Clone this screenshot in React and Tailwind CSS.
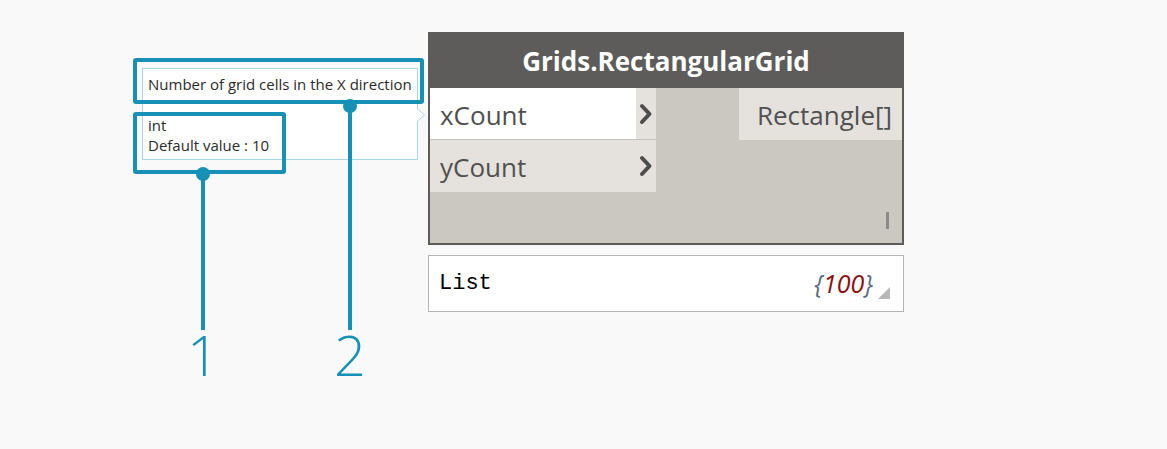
import React from 'react'

const TEAL = 'bg-[#1690b5]'

function Callout({ className, children }) {
  return (
    <div className={`absolute rounded-[3px] border-4 border-[#1690b5] ${className}`}>{children}</div>
  )
}

function Leader({ x, top, length, label }) {
  return (
    <div className="absolute flex flex-col items-center" style={{ left: x - 30, top: top - 7, width: 60 }}>
      <div className={`h-[14px] w-[14px] rounded-full ${TEAL}`}></div>
      <div className={`-mt-[7px] w-[4px] ${TEAL}`} style={{ height: length }}></div>
      <div className="mt-[-4px] font-['Open_Sans',sans-serif] text-[56px] font-light leading-[56px] text-[#1690b5]">
        {label}
      </div>
    </div>
  )
}

function Chevron() {
  return (
    <svg width="14" height="22" viewBox="0 0 14 22" className="text-[#4d4d4d]">
      <path d="M3 3 L10.5 11 L3 19" fill="none" stroke="currentColor" strokeWidth="4" strokeLinecap="round" strokeLinejoin="round" />
    </svg>
  )
}

function Tooltip() {
  return (
    <div className="relative ml-[142px] mt-[36px] h-[92px] w-[276px] border border-[#a9d5e6] bg-white px-[5px] pt-[5px] font-['Open_Sans',sans-serif] text-[15px] leading-[20px] text-[#2b2b2b]">
      <div className="whitespace-nowrap">Number of grid cells in the X direction</div>
      <div className="mt-[21px]">int</div>
      <div>Default value : 10</div>
      <svg className="absolute right-[-9px] top-[39px]" width="9" height="14" viewBox="0 0 9 14">
        <path d="M0 0.5 L7.5 7 L0 13.5" fill="#ffffff" stroke="#a9d5e6" strokeWidth="1" />
        <path d="M0 1.5 L0 12.5" stroke="#ffffff" strokeWidth="1.5" />
      </svg>
    </div>
  )
}

function Node() {
  return (
    <div className="flex w-[476px] flex-col">
      <div className="flex flex-col border-2 border-[#5e5c5a] bg-[#cbc7c1]">
        <div className="flex h-[54px] items-center justify-center bg-[#5e5c5a] font-['Open_Sans',sans-serif] text-[26px] font-bold text-white">
          Grids.RectangularGrid
        </div>
        <div className="flex h-[155px] justify-between">
          <div className="flex w-[226px] flex-col">
            <div className="flex h-[52px] border-b border-[#c6c3be]">
              <div className="flex w-[206px] items-center bg-white pl-[10px] pt-[3px] font-['Open_Sans',sans-serif] text-[26px] text-[#505050]">
                xCount
              </div>
              <div className="flex flex-1 items-center justify-center bg-[#e5e2dd]">
                <Chevron />
              </div>
            </div>
            <div className="flex h-[52px] bg-[#e5e2dd]">
              <div className="flex w-[206px] items-center pl-[10px] pt-[3px] font-['Open_Sans',sans-serif] text-[26px] text-[#505050]">
                yCount
              </div>
              <div className="flex flex-1 items-center justify-center">
                <Chevron />
              </div>
            </div>
          </div>
          <div className="flex flex-col items-end justify-between">
            <div className="flex h-[52px] w-[163px] items-center justify-end bg-[#e5e2dd] pr-[10px] pt-[3px] font-['Open_Sans',sans-serif] text-[26px] text-[#505050]">
              Rectangle[]
            </div>
            <div className="mb-[14px] mr-[13px] h-[17px] w-[3px] bg-[#8b8b8b]"></div>
          </div>
        </div>
      </div>
      <div className="relative mt-[10px] flex h-[57px] items-center justify-between border border-[#b5b5b5] bg-white pl-[10px] pr-[30px]">
        <span className="font-['Liberation_Mono',monospace] text-[22px] text-black">List</span>
        <span className="font-['Open_Sans',sans-serif] text-[25px] italic">
          <span className="text-[#5b6e86]">{'{'}</span>
          <span className="text-[#8b1010]">100</span>
          <span className="text-[#5b6e86]">{'}'}</span>
        </span>
        <svg className="absolute bottom-[12px] right-[13px]" width="12" height="12" viewBox="0 0 12 12">
          <path d="M12 0 L12 12 L0 12 Z" fill="#b8b8b8" />
        </svg>
      </div>
    </div>
  )
}

export default function App() {
  return (
    <div className="min-h-[449px] w-full bg-[#f9f9f9]">
      <div className="flex pt-[32px]">
        <div className="relative h-[380px] w-[428px]">
          <Tooltip />
          <Callout className="left-[133px] top-[26px] h-[46px] w-[291px]" />
          <Callout className="left-[133px] top-[80px] h-[62px] w-[153px]" />
          <Leader x={203} top={142} length={156} label="1" />
          <Leader x={350} top={74} length={224} label="2" />
        </div>
        <Node />
      </div>
    </div>
  )
}
